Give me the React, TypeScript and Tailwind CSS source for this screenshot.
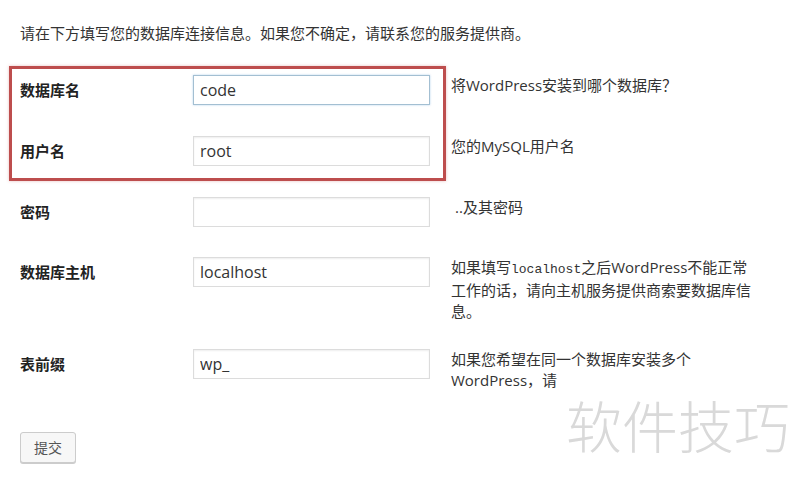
import React from "react";

type Field = {
  label: string;
  value: string;
  height: string;
  focused?: boolean;
  hint: React.ReactNode;
};

const FIELDS: Field[] = [
  {
    label: "数据库名",
    value: "code",
    height: "h-[61px]",
    focused: true,
    hint: "将WordPress安装到哪个数据库？",
  },
  {
    label: "用户名",
    value: "root",
    height: "h-[61px]",
    hint: "您的MySQL用户名",
  },
  {
    label: "密码",
    value: "",
    height: "h-[60px]",
    hint: <span className="pl-[4px]">..及其密码</span>,
  },
  {
    label: "数据库主机",
    value: "localhost",
    height: "h-[92px]",
    hint: (
      <>
        如果填写
        <code className="font-['Liberation_Mono',monospace] text-[13px]">localhost</code>
        之后WordPress不能正常
        <br />
        工作的话，请向主机服务提供商索要数据库信
        <br />
        息。
      </>
    ),
  },
  {
    label: "表前缀",
    value: "wp_",
    height: "h-[83px]",
    hint: (
      <>
        如果您希望在同一个数据库安装多个
        <br />
        WordPress，请
      </>
    ),
  },
];

function FieldRow({ field }: { field: Field }) {
  return (
    <div className={`flex items-start ${field.height}`}>
      <label className="w-[173px] shrink-0 pt-[4px] text-[15px] leading-[22px] font-bold text-[#222]">
        {field.label}
      </label>
      <input
        type="text"
        defaultValue={field.value}
        readOnly
        className={
          field.focused
            ? "w-[237px] h-[30px] shrink-0 px-[6px] bg-white border border-[#a3bfd2] shadow-[0_0_2px_rgba(91,157,217,0.45)] text-[16px] text-[#333] font-['Open_Sans',sans-serif] outline-none"
            : "w-[237px] h-[30px] shrink-0 px-[6px] bg-white border border-[#dcdcdc] shadow-[inset_0_1px_2px_rgba(0,0,0,0.07)] text-[16px] text-[#333] font-['Open_Sans',sans-serif] outline-none"
        }
      />
      <p className="ml-[21px] w-[310px] text-[15px] leading-[21px] text-[#333]">
        {field.hint}
      </p>
    </div>
  );
}

export default function App() {
  return (
    <div className="relative w-[800px] h-[490px] overflow-hidden bg-white font-['Open_Sans','Noto_Sans_CJK_SC',sans-serif]">
      <div className="pl-[20px] pt-[22px]">
        <p className="text-[15px] leading-[22px] text-[#333]">
          请在下方填写您的数据库连接信息。如果您不确定，请联系您的服务提供商。
        </p>

        <div className="mt-[31px]">
          {FIELDS.map((f) => (
            <FieldRow key={f.label} field={f} />
          ))}
        </div>

        <button className="w-[56px] h-[31px] rounded-[3px] border border-[#ccc] bg-[#f7f7f7] shadow-[0_1px_0_#ccc] text-[14px] text-[#555] font-['Noto_Sans_CJK_SC',sans-serif]">
          提交
        </button>
      </div>

      {/* red highlight around the first two fields */}
      <div className="absolute left-[9px] top-[66px] w-[437px] h-[115px] border-[3px] border-[#bd4d4d] shadow-[0_0_3px_rgba(189,77,77,0.35)] pointer-events-none" />

      {/* watermark */}
      <div className="absolute left-[566px] top-[396px] text-[56px] leading-none font-light tracking-[0px] text-[#d9d9d9] font-['Noto_Sans_CJK_SC',sans-serif] pointer-events-none">
        软件技巧
      </div>
    </div>
  );
}
